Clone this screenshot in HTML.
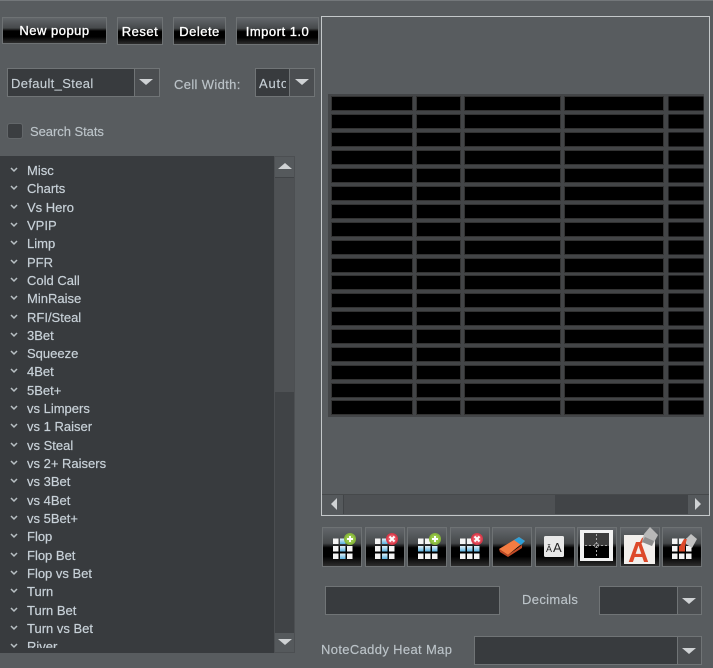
<!DOCTYPE html>
<html><head><meta charset="utf-8"><style>
html,body{margin:0;padding:0}
body{width:713px;height:668px;background:#585c5f;overflow:hidden;position:relative;font-family:"Liberation Sans",sans-serif;font-size:13px;letter-spacing:.35px}
div{position:absolute;box-sizing:border-box}
.t{white-space:nowrap;line-height:16px;color:#bcc4c9;-webkit-text-stroke:.15px #bcc4c9}
.b{border:1px solid #6e7274;color:#fff;text-align:center;line-height:27px;height:28px;top:17px;background:linear-gradient(#62666a 0,#46494b 40%,#000 52%,#000 75%,#2d2d2d 100%);letter-spacing:.5px;-webkit-text-stroke:.35px #fff}
.i{background:#383b3e;border:1px solid #707476}
.l{left:27px;color:#c8d1d8;white-space:nowrap;line-height:16px;letter-spacing:0;-webkit-text-stroke:.2px #c8d1d8}
</style></head><body>
<div style="left:0;top:0;width:713px;height:1px;background:#73777a"></div>

<div class="b" style="left:2px;width:105px;top:17px;height:27px;line-height:26px">New popup</div>
<div class="b" style="left:117px;width:46px">Reset</div>
<div class="b" style="left:173px;width:53px">Delete</div>
<div class="b" style="left:236px;width:83px">Import 1.0</div>

<div class="i" style="left:7px;top:68px;width:153px;height:29px"></div>
<div style="left:134px;top:69px;width:25px;height:27px;background:#4b4e51;border-left:1px solid #707476"></div>
<div class="t" style="left:11px;top:76px;color:#c8d1d8">Default_Steal</div>
<div class="t" style="left:174px;top:77px">Cell Width:</div>
<div class="i" style="left:255px;top:68px;width:60px;height:29px"></div>
<div style="left:289px;top:69px;width:25px;height:27px;background:#4b4e51;border-left:1px solid #707476"></div>
<div class="t" style="left:259px;top:76px;width:27px;overflow:hidden;color:#c8d1d8;letter-spacing:.8px">Auto</div>

<div style="left:7px;top:123px;width:16px;height:16px;background:#3b3e41;border:1px solid #63676a;border-radius:3px"></div>
<div class="t" style="left:30px;top:124px;letter-spacing:-.05px">Search Stats</div>

<div style="left:0;top:156px;width:295px;height:497px;background:#383b3e;overflow:hidden">
<div style="left:274px;top:0;width:21px;height:497px;background:#404346;border:1px solid #4c4f52"></div>
<div style="left:275px;top:1px;width:19px;height:20px;background:#55595c"></div>
<div style="left:275px;top:22px;width:19px;height:214px;background:#4e5154"></div>
<div style="left:275px;top:477px;width:19px;height:19px;background:#55595c"></div>
<div class="l" style="top:7px">Misc</div>
<div class="l" style="top:25px">Charts</div>
<div class="l" style="top:44px">Vs Hero</div>
<div class="l" style="top:62px">VPIP</div>
<div class="l" style="top:80px">Limp</div>
<div class="l" style="top:99px">PFR</div>
<div class="l" style="top:117px">Cold Call</div>
<div class="l" style="top:135px">MinRaise</div>
<div class="l" style="top:154px">RFI/Steal</div>
<div class="l" style="top:172px">3Bet</div>
<div class="l" style="top:190px">Squeeze</div>
<div class="l" style="top:208px">4Bet</div>
<div class="l" style="top:227px">5Bet+</div>
<div class="l" style="top:245px">vs Limpers</div>
<div class="l" style="top:263px">vs 1 Raiser</div>
<div class="l" style="top:282px">vs Steal</div>
<div class="l" style="top:300px">vs 2+ Raisers</div>
<div class="l" style="top:318px">vs 3Bet</div>
<div class="l" style="top:337px">vs 4Bet</div>
<div class="l" style="top:355px">vs 5Bet+</div>
<div class="l" style="top:373px">Flop</div>
<div class="l" style="top:392px">Flop Bet</div>
<div class="l" style="top:410px">Flop vs Bet</div>
<div class="l" style="top:428px">Turn</div>
<div class="l" style="top:447px">Turn Bet</div>
<div class="l" style="top:465px">Turn vs Bet</div>
<div class="l" style="top:483px">River</div>
<div style="left:0;top:492px;width:274px;height:5px;background:#383b3e"></div>
</div>

<div style="left:321px;top:16px;width:389px;height:500px;border:1px solid #c4c8ca;background:#585c5f"></div>
<div style="left:322px;top:494px;width:387px;height:1px;background:#46494b"></div>
<div style="left:323px;top:495px;width:385px;height:19px;background:#414447"></div>
<div style="left:323px;top:495px;width:20px;height:19px;background:#55595c"></div>
<div style="left:344px;top:495px;width:211px;height:19px;background:#4e5154"></div>
<div style="left:688px;top:495px;width:20px;height:19px;background:#55595c"></div>

<div class="b" style="left:322px;top:527px;width:40px;height:40px"></div>
<div class="b" style="left:365px;top:527px;width:40px;height:40px"></div>
<div class="b" style="left:407px;top:527px;width:40px;height:40px"></div>
<div class="b" style="left:450px;top:527px;width:40px;height:40px"></div>
<div class="b" style="left:492px;top:527px;width:40px;height:40px"></div>
<div class="b" style="left:535px;top:527px;width:40px;height:40px"></div>
<div class="b" style="left:577px;top:527px;width:40px;height:40px"></div>
<div class="b" style="left:620px;top:527px;width:40px;height:40px"></div>
<div class="b" style="left:662px;top:527px;width:40px;height:40px"></div>

<div class="i" style="left:325px;top:586px;width:175px;height:29px"></div>
<div class="t" style="left:522px;top:592px">Decimals</div>
<div class="i" style="left:599px;top:586px;width:103px;height:29px"></div>
<div style="left:677px;top:587px;width:24px;height:27px;background:#4b4e51;border-left:1px solid #707476"></div>
<div class="t" style="left:321px;top:642px">NoteCaddy Heat Map</div>
<div class="i" style="left:474px;top:636px;width:228px;height:29px"></div>
<div style="left:677px;top:637px;width:24px;height:27px;background:#4b4e51;border-left:1px solid #707476"></div>

<svg width="713" height="668" style="position:absolute;left:0;top:0">
<defs>
<filter id="bl" x="-10%" y="-10%" width="120%" height="120%"><feGaussianBlur stdDeviation=".35"/></filter>
<g id="r" fill="#000" stroke="#333" stroke-width="1">
<rect x="331.5" y=".5" width="81" height="14"/><rect x="416.5" y=".5" width="44" height="14"/><rect x="464.5" y=".5" width="96" height="14"/><rect x="564.5" y=".5" width="99" height="14"/><rect x="668.5" y=".5" width="35" height="14" stroke="none"/>
</g>
<g id="w" fill="#f4f4f4"><rect width="5.500" height="5.500"/></g>
<g id="u"><rect width="5.500" height="5.500" fill="url(#blu)"/></g>
<g id="g"><use href="#w"/><use href="#w" x="7"/><use href="#w" x="14"/><use href="#w" y="7.500"/><use href="#w" x="7" y="7.500"/><use href="#w" x="14" y="7.500"/><use href="#w" y="15"/><use href="#w" x="7" y="15"/><use href="#w" x="14" y="15"/></g>
<g id="p"><circle r="6" fill="#86b53a"/><circle r="4.500" fill="#97c748"/><path d="M-3 0H3M0-3V3" stroke="#fff" stroke-width="2"/></g>
<g id="x"><circle r="6" fill="#d9394a"/><circle r="4.500" fill="#e85a66"/><path d="M-2.500-2.500L2.500 2.500M2.500-2.500L-2.500 2.500" stroke="#fff" stroke-width="2"/></g>
<linearGradient id="blu" x1="0" y1="0" x2="0" y2="1"><stop offset="0" stop-color="#e4f2f9"/><stop offset="1" stop-color="#58b0de"/></linearGradient>
</defs>
<rect x="328" y="94" width="376" height="323" fill="#434547"/>
<use href="#r" y="96"/><use href="#r" y="114"/><use href="#r" y="132"/><use href="#r" y="150"/><use href="#r" y="168"/><use href="#r" y="186"/><use href="#r" y="204"/><use href="#r" y="222"/><use href="#r" y="240"/><use href="#r" y="258"/><use href="#r" y="275"/><use href="#r" y="293"/><use href="#r" y="311"/><use href="#r" y="329"/><use href="#r" y="347"/><use href="#r" y="365"/><use href="#r" y="383"/><use href="#r" y="400"/>

<g fill="#cfd2d4">
<path d="M139 79h14l-7 6z"/><path d="M295 79h14l-7 6z"/><path d="M682 598h14l-7 6z"/><path d="M682 648h14l-7 6z"/>
<path d="M278 169l7-6 7 6z"/><path d="M278 639h14l-7 6z"/>
<path d="M337 498v12l-6-6z"/><path d="M695 498v12l6-6z"/>
</g>
<g fill="none" stroke="#b9c0c4" stroke-width="1.500">
<path d="M11 168l3 3 3-3"/><path d="M11 186l3 3 3-3"/><path d="M11 205l3 3 3-3"/><path d="M11 223l3 3 3-3"/><path d="M11 241l3 3 3-3"/><path d="M11 260l3 3 3-3"/><path d="M11 278l3 3 3-3"/><path d="M11 296l3 3 3-3"/><path d="M11 315l3 3 3-3"/><path d="M11 333l3 3 3-3"/><path d="M11 351l3 3 3-3"/><path d="M11 369l3 3 3-3"/><path d="M11 388l3 3 3-3"/><path d="M11 406l3 3 3-3"/><path d="M11 424l3 3 3-3"/><path d="M11 443l3 3 3-3"/><path d="M11 461l3 3 3-3"/><path d="M11 479l3 3 3-3"/><path d="M11 498l3 3 3-3"/><path d="M11 516l3 3 3-3"/><path d="M11 534l3 3 3-3"/><path d="M11 553l3 3 3-3"/><path d="M11 571l3 3 3-3"/><path d="M11 589l3 3 3-3"/><path d="M11 608l3 3 3-3"/><path d="M11 626l3 3 3-3"/><path d="M11 644l3 3 3-3"/>
</g>

<g filter="url(#bl)">
<use href="#g" x="333" y="538.500"/><use href="#u" x="340" y="538.500"/><use href="#u" x="340" y="546"/><use href="#u" x="340" y="553.500"/><use href="#p" x="350" y="539"/>
<use href="#g" x="375" y="538.500"/><use href="#u" x="382" y="538.500"/><use href="#u" x="382" y="546"/><use href="#u" x="382" y="553.500"/><use href="#x" x="392" y="539"/>
<use href="#g" x="418" y="538.500"/><use href="#u" x="418" y="546"/><use href="#u" x="425" y="546"/><use href="#u" x="432" y="546"/><use href="#p" x="435" y="539"/>
<use href="#g" x="460" y="538.500"/><use href="#u" x="460" y="546"/><use href="#u" x="467" y="546"/><use href="#u" x="474" y="546"/><use href="#x" x="477" y="539"/>

<path d="M499 549L519 537L525 541L508 555Z" fill="#f47c42"/><path d="M514 540L519 537L525 541L521 545Z" fill="#2f9fd8"/><path d="M499 549L508 555L522 545L522 548L508 557L500 552Z" fill="#c44c28"/>

<rect x="544" y="536" width="20" height="21" rx="1.500" fill="#e8e8e8"/>
<text x="546" y="552" font-size="9" fill="#222" style="letter-spacing:0">Â</text><text x="553" y="552" font-size="13" fill="#222" style="letter-spacing:0">A</text>

<rect x="580" y="530" width="33" height="31" fill="#f2f2f2"/>
<rect x="584" y="533" width="25" height="13" fill="#3c3c3e"/><rect x="584" y="546" width="25" height="12" fill="#050505"/>
<path d="M596.500 534V557M585 545.500H608" stroke="#aaa" stroke-width="1" stroke-dasharray="2 2"/>
<circle cx="596.500" cy="545.500" r="2" fill="none" stroke="#aaa" stroke-width=".8"/>

<rect x="624" y="535" width="31" height="29" fill="#f2efec"/>
<text x="628" y="562" font-size="29" font-weight="700" fill="#dd4a2a" style="letter-spacing:0">A</text>
<path d="M638 546L642 538L646 536L643 542Z" fill="#dd4a2a"/>
<path d="M644 534L650 527L658 535L652 546L642 542Z" fill="#b8b8b8"/><path d="M642 542L652 546L654 541L645 537Z" fill="#8d8d8d"/>

<use href="#g" x="672" y="538.500"/><rect x="679" y="546" width="6" height="5.500" fill="#dd4a2a"/><path d="M680 546L684 539L687 539L685 546Z" fill="#dd4a2a"/>
<path d="M687 538L691 534L697 539L692 548L686 544Z" fill="#c2c2c2"/>
</g>
</svg>
</body></html>
